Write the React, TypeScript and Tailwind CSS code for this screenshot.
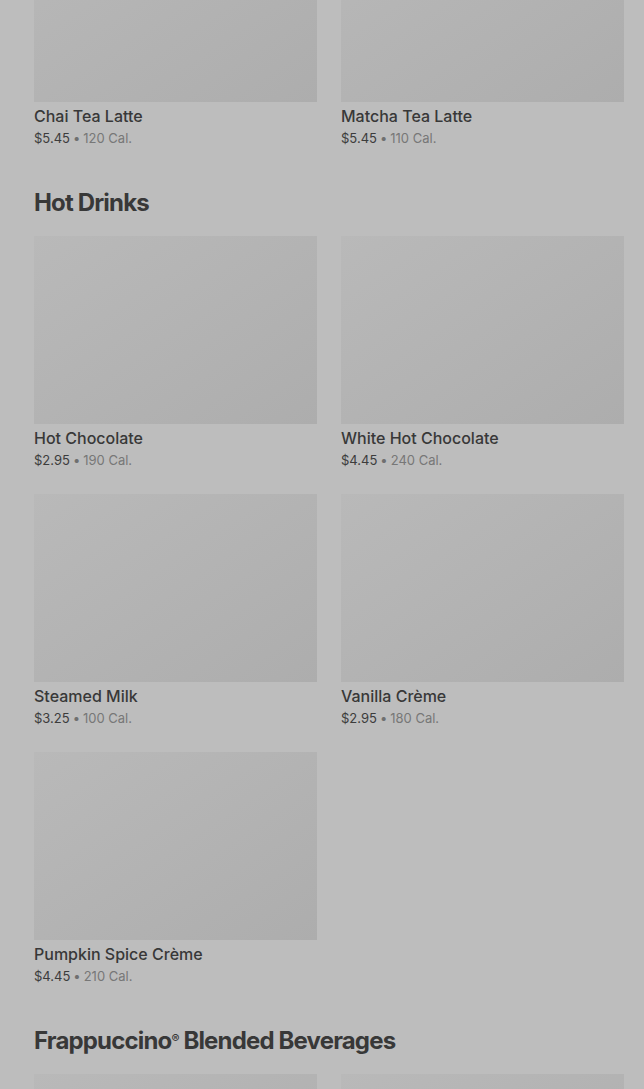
type Item = { name: string; price: string; cal: string };

const sections: { title?: string; items: Item[] }[] = [
  {
    items: [
      { name: "Chai Tea Latte", price: "$5.45", cal: "120 Cal." },
      { name: "Matcha Tea Latte", price: "$5.45", cal: "110 Cal." },
    ],
  },
  {
    title: "Hot Drinks",
    items: [
      { name: "Hot Chocolate", price: "$2.95", cal: "190 Cal." },
      { name: "White Hot Chocolate", price: "$4.45", cal: "240 Cal." },
      { name: "Steamed Milk", price: "$3.25", cal: "100 Cal." },
      { name: "Vanilla Crème", price: "$2.95", cal: "180 Cal." },
      { name: "Pumpkin Spice Crème", price: "$4.45", cal: "210 Cal." },
    ],
  },
];

function Card({ item }: { item: Item }) {
  return (
    <div className="flex flex-col">
      <div className="h-[188px] bg-gradient-to-br from-[#b9b9b9] to-[#adadad]" />
      <div className="mt-[2px] text-[16px] leading-6 font-medium text-[#383838]">{item.name}</div>
      <div className="text-[13px] leading-5 text-[#3c3c3c]">
        {item.price}
        <span className="mx-[3px] text-[#6f6f6f]">•</span>
        <span className="text-[#777777]">{item.cal}</span>
      </div>
    </div>
  );
}

export default function App() {
  return (
    <div
      className="h-[1089px] overflow-hidden bg-[#bdbdbd] pl-[34px] pr-[20px]"
      style={{ fontFamily: "Inter, 'Noto Sans', sans-serif" }}
    >
      <div className="-mt-[86px] flex flex-col gap-[39px]">
        {sections.map((s, i) => (
          <div key={i} className="flex flex-col gap-[17px]">
            {s.title && (
              <h2 className="text-[24px] leading-8 font-bold tracking-[-0.035em] text-[#383838]">
                {s.title}
              </h2>
            )}
            <div className="grid grid-cols-2 gap-x-6 gap-y-6">
              {s.items.map((it) => (
                <Card key={it.name} item={it} />
              ))}
            </div>
          </div>
        ))}
        <div className="flex flex-col gap-[17px]">
          <h2 className="text-[24px] leading-8 font-bold tracking-[-0.035em] text-[#383838]">
            Frappuccino<sup className="text-[12px] font-semibold">®</sup> Blended Beverages
          </h2>
          <div className="grid grid-cols-2 gap-x-6">
            <div className="h-[188px] bg-gradient-to-br from-[#b9b9b9] to-[#adadad]" />
            <div className="h-[188px] bg-gradient-to-br from-[#b9b9b9] to-[#adadad]" />
          </div>
        </div>
      </div>
    </div>
  );
}
